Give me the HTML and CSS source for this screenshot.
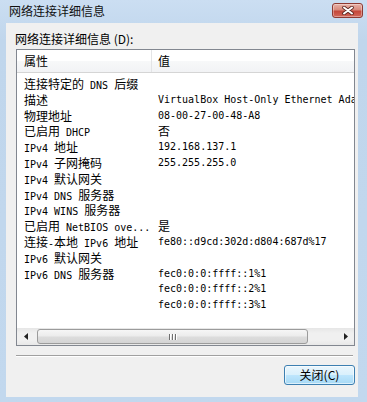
FILE: index.html
```html
<!DOCTYPE html>
<html lang="zh-CN">
<head>
<meta charset="UTF-8" />
<title>网络连接详细信息</title>
<link rel="stylesheet" href="styles.css">
</head>
<body>
<div class="window">
  <div class="titlebar">
    <span class="title">网络连接详细信息</span>
    <button class="close-btn" aria-label="关闭">
      <svg width="12" height="9" viewBox="0 0 12 9">
        <path d="M2 1.5 L10 7.5 M10 1.5 L2 7.5" stroke="#5b2620" stroke-width="3.6" stroke-linecap="round" />
        <path d="M2 1.5 L10 7.5 M10 1.5 L2 7.5" stroke="#fff" stroke-width="2" stroke-linecap="round" />
      </svg>
    </button>
  </div>

  <div class="client">
    <div class="label">网络连接详细信息 (<u>D</u>):</div>

    <div class="listview">
      <div class="lv-header">
        <div class="col-prop">属性</div>
        <div class="col-val">值</div>
      </div>

      <div class="lv-body">
        <div class="row"><div class="col-prop">连接特定的<span class="m"> DNS </span>后缀</div><div class="col-val"></div></div>
        <div class="row"><div class="col-prop">描述</div><div class="col-val m">VirtualBox Host-Only Ethernet Adapter</div></div>
        <div class="row"><div class="col-prop">物理地址</div><div class="col-val m">08-00-27-00-48-A8</div></div>
        <div class="row"><div class="col-prop">已启用<span class="m"> DHCP</span></div><div class="col-val">否</div></div>
        <div class="row"><div class="col-prop"><span class="m">IPv4 </span>地址</div><div class="col-val m">192.168.137.1</div></div>
        <div class="row"><div class="col-prop"><span class="m">IPv4 </span>子网掩码</div><div class="col-val m">255.255.255.0</div></div>
        <div class="row"><div class="col-prop"><span class="m">IPv4 </span>默认网关</div><div class="col-val"></div></div>
        <div class="row"><div class="col-prop"><span class="m">IPv4 DNS </span>服务器</div><div class="col-val"></div></div>
        <div class="row"><div class="col-prop"><span class="m">IPv4 WINS </span>服务器</div><div class="col-val"></div></div>
        <div class="row"><div class="col-prop">已启用<span class="m"> NetBIOS ove...</span></div><div class="col-val">是</div></div>
        <div class="row"><div class="col-prop">连接<span class="m">-</span>本地<span class="m"> IPv6 </span>地址</div><div class="col-val m">fe80::d9cd:302d:d804:687d%17</div></div>
        <div class="row"><div class="col-prop"><span class="m">IPv6 </span>默认网关</div><div class="col-val"></div></div>
        <div class="row"><div class="col-prop"><span class="m">IPv6 DNS </span>服务器</div><div class="col-val m">fec0:0:0:ffff::1%1</div></div>
        <div class="row"><div class="col-prop"></div><div class="col-val m">fec0:0:0:ffff::2%1</div></div>
        <div class="row"><div class="col-prop"></div><div class="col-val m">fec0:0:0:ffff::3%1</div></div>
      </div>

      <div class="hscroll">
        <div class="sb-btn">
          <svg width="4" height="7" viewBox="0 0 4 7"><path d="M4 0 L0 3.5 L4 7 Z" fill="#222" /></svg>
        </div>
        <div class="sb-track">
          <div class="sb-thumb">
            <span class="grip"></span><span class="grip"></span><span class="grip"></span>
          </div>
        </div>
        <div class="sb-btn">
          <svg width="4" height="7" viewBox="0 0 4 7"><path d="M0 0 L4 3.5 L0 7 Z" fill="#222" /></svg>
        </div>
      </div>
    </div>

    <div class="separator"></div>

    <div class="actions">
      <button class="btn">关闭(<u>C</u>)</button>
    </div>
  </div>
</div>
</body>
</html>
```

FILE: styles.css
```css
* {
  box-sizing: border-box;
}
body {
  margin: 0;
  background: #c4d9ee;
  font-family: "Noto Sans CJK SC", "Noto Sans", sans-serif;
  font-size: 12px;
  color: #000;
}
.window {
  width: 367px;
  height: 402px;
  display: flex;
  flex-direction: column;
  background: linear-gradient(#cbdef2, #c0d6ec 40px, #c2d8ee);
}
.titlebar {
  height: 23px;
  display: flex;
  align-items: flex-start;
  justify-content: space-between;
  padding: 0 4px 0 9px;
}
.title {
  line-height: 21px;
  color: #111;
}
.close-btn {
  margin-top: 3px;
  width: 31px;
  height: 15px;
  padding: 0;
  border: 1px solid #8e3a33;
  border-radius: 3px;
  background: linear-gradient(#e8b2a8 0%, #d88a7c 45%, #c4473a 55%, #d2685a 100%);
  display: flex;
  align-items: center;
  justify-content: center;
  box-shadow: inset 0 0 0 1px rgba(255, 255, 255, 0.35);
}
.client {
  flex: 1;
  margin: 0 9px 5px 6px;
  background: #f0f0f0;
  padding: 8px 3px 12px 10px;
  display: flex;
  flex-direction: column;
}
.label {
  line-height: 16px;
  margin-left: -1px;
}
u {
  text-decoration: none;
}
.listview {
  margin-top: 2px;
  height: 297px;
  border: 1px solid #828790;
  background: #fff;
  display: flex;
  flex-direction: column;
  overflow: hidden;
}
.lv-header {
  height: 23px;
  flex: none;
  display: flex;
  border-bottom: 1px solid #d5d5d5;
  background: linear-gradient(#fff 0%, #fff 50%, #f7f8f9 50%, #f2f3f5 100%);
  line-height: 22px;
}
.col-prop {
  width: 135px;
  flex: none;
  padding-left: 7px;
  white-space: nowrap;
  overflow: hidden;
}
.col-val {
  padding-left: 6px;
  white-space: nowrap;
}
.lv-header .col-prop {
  border-right: 1px solid #e3e4e6;
}
.lv-body {
  flex: 1;
  padding-top: 3px;
}
.row {
  display: flex;
  height: 15.8px;
  line-height: 15.8px;
}
.m {
  font-family: "DejaVu Sans Mono", "Liberation Mono", monospace;
  font-size: 10px;
  white-space: pre;
}
.hscroll {
  height: 17px;
  flex: none;
  display: flex;
  background: linear-gradient(#e6e6e6, #f0f0f0 30%, #f0f0f0 70%, #e8e8e8);
}
.sb-btn {
  width: 17px;
  display: flex;
  align-items: center;
  justify-content: center;
}
.sb-track {
  flex: 1;
  padding: 1px 29px 1px 3px;
}
.sb-thumb {
  height: 15px;
  border: 1px solid #9b9b9b;
  border-radius: 3px;
  background: linear-gradient(#f6f6f6, #ececec 45%, #dcdcdc 55%, #d4d4d4);
  display: flex;
  align-items: center;
  justify-content: center;
  gap: 2px;
}
.grip {
  width: 1px;
  height: 6px;
  background: #6f6f6f;
  box-shadow: 1px 0 0 #fff;
}
.separator {
  margin: 9px 2px 0 0;
  height: 2px;
  border-top: 1px solid #a0a0a0;
  border-bottom: 1px solid #fff;
}
.actions {
  margin-top: 8px;
  display: flex;
  justify-content: flex-end;
}
.btn {
  width: 71px;
  height: 20px;
  padding: 0;
  border: 1px solid #3c7fb1;
  border-radius: 3px;
  background: linear-gradient(#eaf6fd 0%, #d9f0fc 50%, #bee6fd 50%, #a7d9f5 100%);
  box-shadow: inset 0 0 0 1px rgba(255, 255, 255, 0.6);
  font-family: "Noto Sans CJK SC", "Noto Sans", sans-serif;
  font-size: 12px;
  line-height: 18px;
  color: #000;
}
```
